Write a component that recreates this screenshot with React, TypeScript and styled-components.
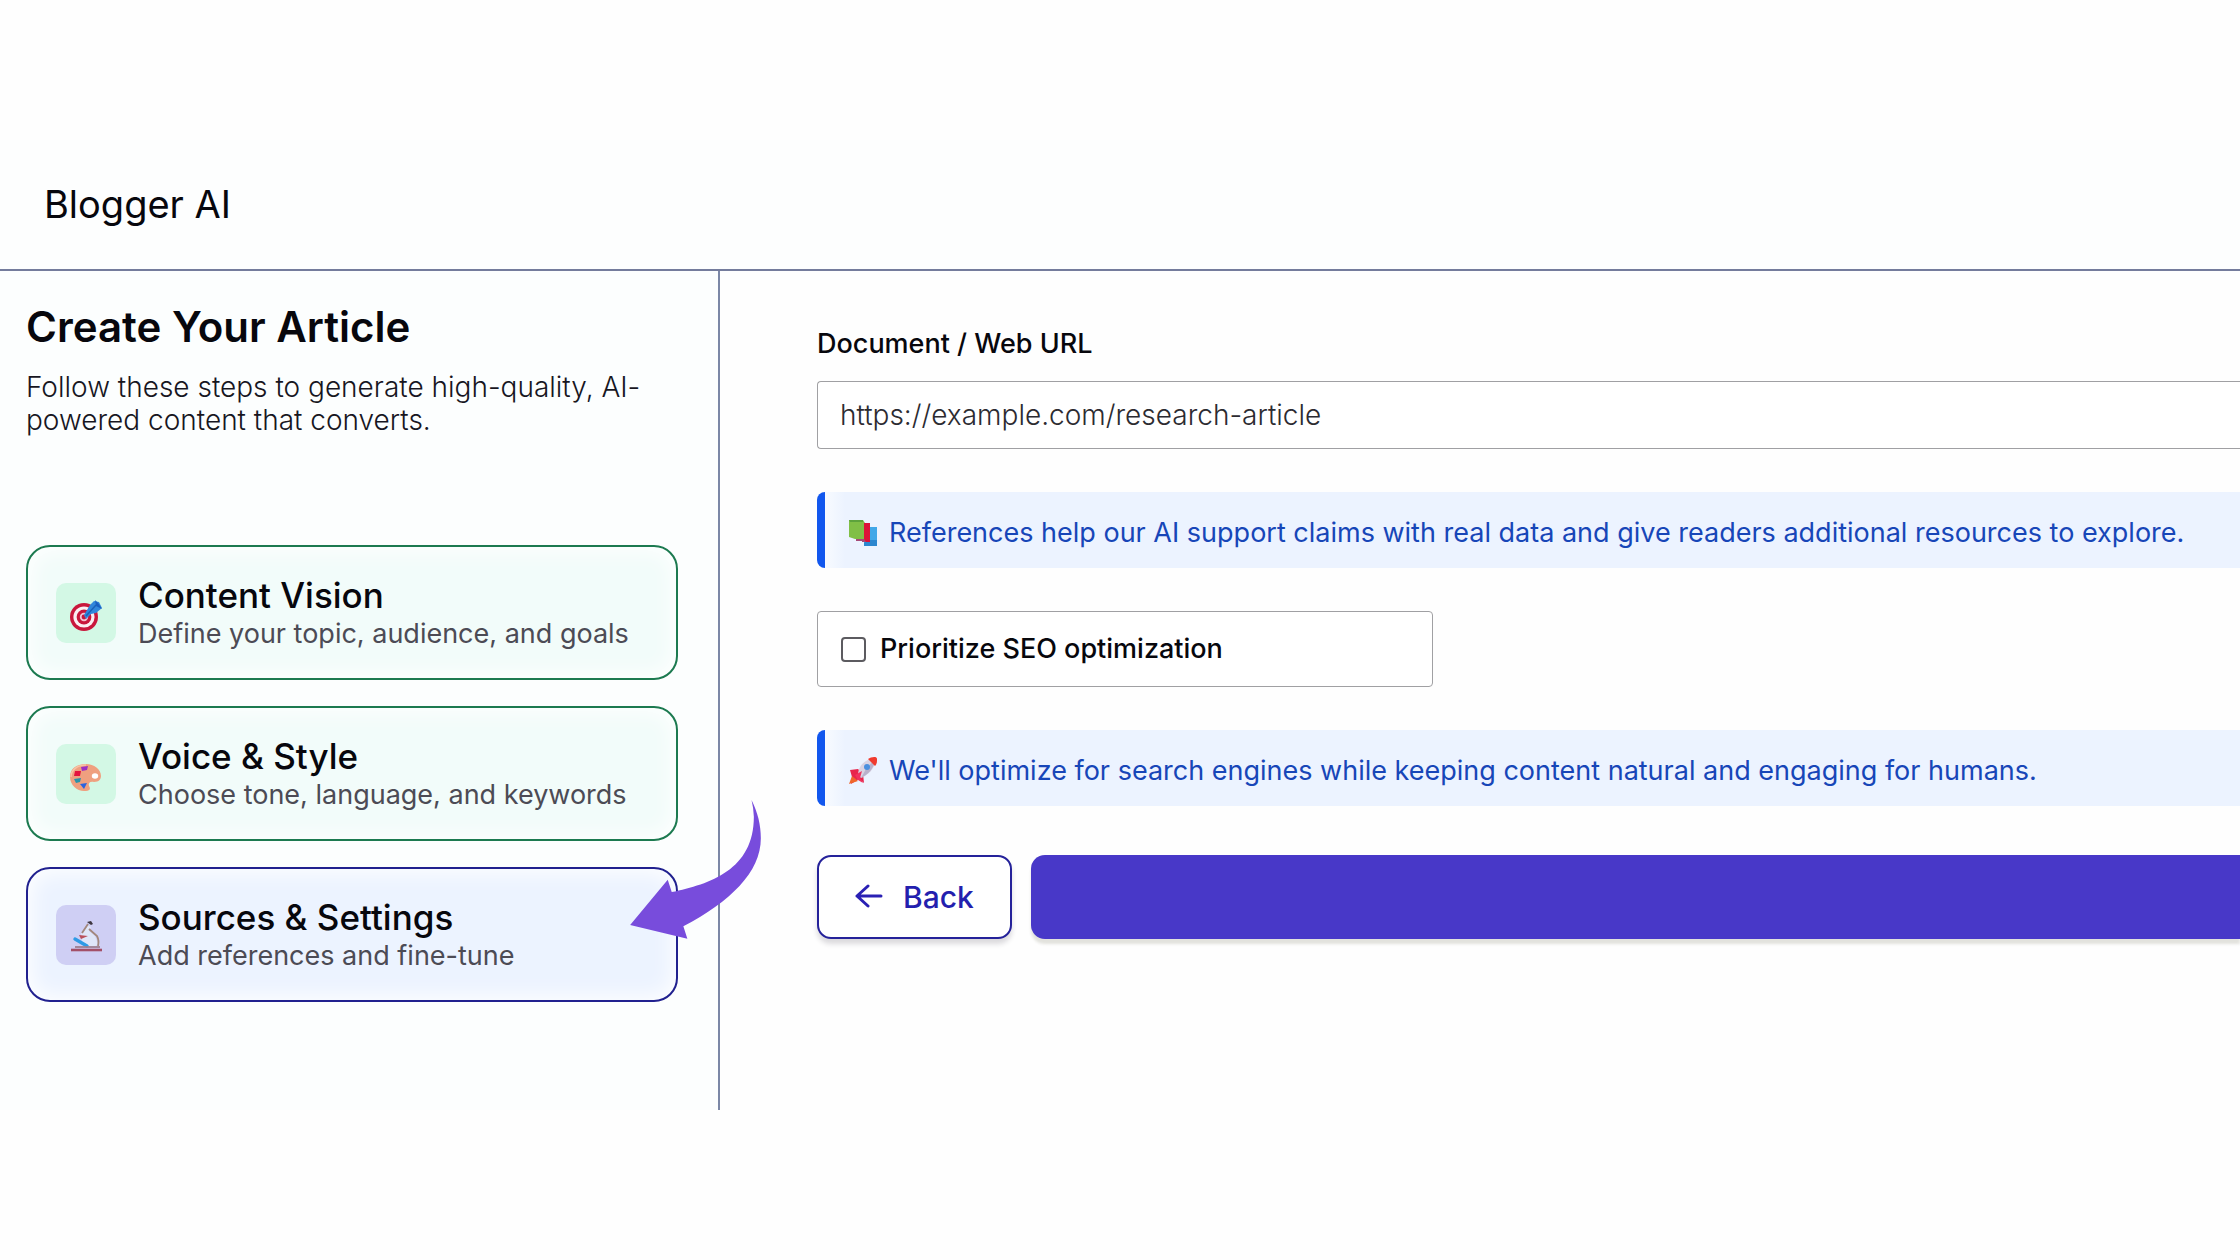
import React from "react";
import styled, { createGlobalStyle } from "styled-components";

type Tone = "done" | "active";

const tones: Record<Tone, { border: string; fill: string; tile: string }> = {
  done: { border: "#1c7a50", fill: "#f2fcfa", tile: "#d3f8e5" },
  active: { border: "#21218f", fill: "#ecf3ff", tile: "#cfcff4" },
};

const GlobalStyle = createGlobalStyle`
  *, *::before, *::after { box-sizing: border-box; }
  body {
    margin: 0;
    background: #fefefe;
    color: #07070d;
    font-family: Inter, "Liberation Sans", sans-serif;
    font-size: 27px;
    line-height: 33px;
    overflow-x: hidden;
  }
  button, input { font: inherit; color: inherit; }
`;

const Page = styled.div`
  padding: 140px 0;
`;

const Header = styled.header`
  padding: 40px 44px;
  border-bottom: 2px solid #747c9c;
  background: #fdfefe;
`;

const Brand = styled.div`
  font-size: 38px;
  line-height: 49px;
`;

const Body = styled.div`
  display: grid;
  grid-template-columns: 720px minmax(0, 1fr);
`;

const Sidebar = styled.aside`
  padding: 32px 40px 108px 26px;
  border-right: 2px solid #7b87a6;
  background: #fcfefe;
`;

const Title = styled.h1`
  margin: 0 0 20px;
  font-size: 42px;
  font-weight: 600;
  line-height: 48px;
`;

const Intro = styled.p`
  margin: 0 0 108px;
  color: #17161f;
  font-size: 28px;
  font-weight: 300;
`;

const Steps = styled.ol`
  display: flex;
  flex-direction: column;
  gap: 26px;
  margin: 0;
  padding: 0;
  list-style: none;
`;

const Step = styled.li`
  position: relative;
`;

const StepCard = styled.button<{ $tone: Tone }>`
  display: flex;
  align-items: center;
  gap: 22px;
  width: 100%;
  padding: 28px;
  border: 2px solid ${(p) => tones[p.$tone].border};
  border-radius: 24px;
  background: ${(p) => tones[p.$tone].fill};
  box-shadow: inset 0 0 22px 3px #ffffff;
  text-align: left;
  cursor: pointer;
`;

const IconTile = styled.span<{ $tone: Tone }>`
  display: flex;
  flex: none;
  align-items: center;
  justify-content: center;
  width: 60px;
  height: 60px;
  border-radius: 10px;
  background: ${(p) => tones[p.$tone].tile};
`;

const StepText = styled.span`
  display: flex;
  flex-direction: column;
  min-width: 0;
`;

const StepName = styled.span`
  padding-bottom: 2px;
  font-size: 35px;
  font-weight: 500;
  line-height: 40px;
`;

const StepNote = styled.span`
  color: #4c4b55;
`;

const Pointer = styled.svg`
  position: absolute;
  top: -67px;
  right: -83px;
  width: 131px;
  height: 139px;
  pointer-events: none;
`;

const Form = styled.form`
  display: flex;
  flex-direction: column;
  gap: 43px;
  padding: 56px 0 0 97px;
`;

const Field = styled.div`
  display: flex;
  flex-direction: column;
  gap: 20px;
`;

const Label = styled.label`
  font-weight: 500;
  line-height: 34px;
`;

const UrlInput = styled.input`
  width: 100%;
  height: 68px;
  padding: 0 22px;
  border: 1px solid #a0a0a3;
  border-right: 0;
  border-radius: 4px 0 0 4px;
  background: #ffffff;
  font-size: 28px;
  font-weight: 300;
  &::placeholder {
    color: #2c2b31;
    opacity: 1;
  }
`;

const Note = styled.p`
  display: flex;
  align-items: center;
  gap: 12px;
  margin: 0;
  padding: 24px 24px 18px;
  border-left: 8px solid #1257ee;
  border-radius: 8px 0 0 8px;
  background: linear-gradient(to right, #f8fbff, #ecf3ff 20px);
  color: #1746b8;
  line-height: 34px;
`;

const NoteIcon = styled.svg`
  flex: none;
  width: 28px;
  height: 28px;
`;

const CheckRow = styled.label`
  display: flex;
  align-items: center;
  gap: 14px;
  width: 616px;
  max-width: 100%;
  padding: 20px 23px;
  border: 1px solid #a0a0a3;
  border-radius: 4px;
  background: #ffffff;
  font-weight: 500;
  line-height: 34px;
`;

const Checkbox = styled.input`
  appearance: none;
  flex: none;
  width: 25px;
  height: 25px;
  margin: 0;
  border: 2px solid #5c5b60;
  border-radius: 4px;
  background: #ffffff;
  &:checked {
    background: #4838c8;
  }
`;

const Actions = styled.div`
  display: flex;
  gap: 19px;
  padding-top: 6px;
`;

const BackButton = styled.button`
  display: flex;
  align-items: center;
  gap: 20px;
  height: 84px;
  padding: 0 36px;
  border: 2px solid #25229a;
  border-radius: 14px;
  background: #ffffff;
  box-shadow: 0 5px 5px rgba(40, 30, 50, 0.16);
  color: #241fae;
  font-size: 30px;
  font-weight: 500;
  cursor: pointer;
`;

const SubmitButton = styled.button`
  flex: 1;
  height: 84px;
  border: 0;
  border-radius: 14px 0 0 14px;
  background: #4838c8;
  box-shadow: 0 5px 3px rgba(60, 60, 20, 0.14);
  cursor: pointer;
`;

const TargetIcon = () => (
  <svg width="36" height="40" viewBox="0 0 36 40" aria-hidden="true">
    <circle cx="16" cy="24" r="14" fill="#c9173c" />
    <circle cx="16" cy="24" r="10.6" fill="#fbeef2" />
    <circle cx="16" cy="24" r="7.4" fill="#c9173c" />
    <circle cx="16" cy="24" r="4.2" fill="#f3c3d0" />
    <circle cx="16" cy="24" r="2.4" fill="#c9173c" />
    <path d="M16 22 22 12l4-4 5 1 3 6-6 5-5 1-5 5z" fill="#3187db" />
    <path d="m18 23 10-11" stroke="#1b62b8" strokeWidth="1.5" />
    <path d="m27 7 1 6 6 3-4-6z" fill="#1a5fc0" />
  </svg>
);

const PaletteIcon = () => (
  <svg width="36" height="40" viewBox="0 0 36 40" aria-hidden="true">
    <path
      d="M18 10C8 10 2 15 2 23c0 8 7 14 14 14 6 0 7-2 5-5-1-3 1-5 5-4 5 0 7-3 7-6 0-7-7-12-15-12z"
      fill="#efa07f"
    />
    <path d="M18 11C9 11 3 16 3 23" fill="none" stroke="#f8c3a6" strokeWidth="1.5" />
    <ellipse cx="27" cy="22" rx="3.2" ry="2.8" fill="#ffffff" />
    <path d="m13 13 7-1-1 4-5 1z" fill="#9a2fc4" />
    <path d="m7 17 6 0-1 5-6 0z" fill="#e4133f" />
    <path d="m6 25 7-1-1 4-4 1z" fill="#2b93a8" />
    <path d="m12 30 7-1-3 6z" fill="#2a63e0" />
  </svg>
);

const MicroscopeIcon = () => (
  <svg width="36" height="40" viewBox="0 0 36 40" fill="none" aria-hidden="true">
    <path d="m13 19 6-9 4 2-2 4 6 5 3 8-3 3H15z" fill="#dfe6f9" />
    <path d="m14 18 6-9M21 14l8 7c2 4 2 6 1 10" stroke="#a2877c" strokeWidth="1.8" />
    <path d="m19 7 4-1 2 3-2 1z" fill="#3d3640" />
    <path d="m11 20 9 1-7 3z" fill="#b9505c" />
    <path d="m7 24 12 7" stroke="#2f9be6" strokeWidth="3.4" strokeLinecap="round" />
    <path d="M7 32h25" stroke="#9c7f91" strokeWidth="1.8" />
    <path d="M3 35h31" stroke="#a35068" strokeWidth="2.6" />
  </svg>
);

const BooksIcon = () => (
  <NoteIcon viewBox="0 0 28 28" aria-hidden="true">
    <path d="M16 8h12v17H15z" fill="#41a7e8" />
    <path d="M17 21h11v6H15v-3z" fill="#2c86cf" />
    <path d="M7 19h10v4h-4v-1H7z" fill="#a54a78" />
    <path d="M0 1h14l2 3v16H6l-6-2z" fill="#80bf46" />
    <path d="M0 1h14v2H1z" fill="#5da33c" />
    <path d="M15 4h6v19h-4l-2-3z" fill="#dc1238" />
  </NoteIcon>
);

const RocketIcon = () => (
  <NoteIcon viewBox="0 0 28 28" aria-hidden="true">
    <path d="m1 13 8-1 5 5 1 9-5-4-8 5 1-7z" fill="#e8254c" />
    <path d="m0 27 3-8 6 5z" fill="#f0662b" />
    <path d="M9 18C9 9 16 2 26 1c1 9-5 16-14 20z" fill="#d9d3e2" />
    <path d="M12 21C20 17 26 10 26 2l-9 10z" fill="#b9b1cb" />
    <path d="M19 2c3-2 9-3 9 0 0 3 0 5-2 7z" fill="#f03a2e" />
    <circle cx="18" cy="10" r="3" fill="#4b90df" />
    <path d="m6 18 7-4-2 7 3 5-5-3z" fill="#f1315d" />
  </NoteIcon>
);

const BackArrow = () => (
  <svg width="28" height="28" viewBox="0 0 28 28" fill="none" aria-hidden="true">
    <path
      d="M26 13H2M13 3 2 13l11 10"
      stroke="#2a20b4"
      strokeWidth="3"
      strokeLinecap="round"
      strokeLinejoin="round"
    />
  </svg>
);

const CurvedPointer = () => (
  <Pointer viewBox="90 60 393 418" aria-hidden="true">
    <path
      d="M455 60C474 98 483 135 483 175C483 278 390 366 250 440L262 477L90 436L203 300L215 337C330 312 462 270 462 110Q461 84 455 60Z"
      fill="#784cdc"
    />
  </Pointer>
);

const steps: { name: string; note: string; tone: Tone; icon: React.ReactNode }[] = [
  { name: "Content Vision", note: "Define your topic, audience, and goals", tone: "done", icon: <TargetIcon /> },
  { name: "Voice & Style", note: "Choose tone, language, and keywords", tone: "done", icon: <PaletteIcon /> },
  { name: "Sources & Settings", note: "Add references and fine-tune", tone: "active", icon: <MicroscopeIcon /> },
];

export default function App() {
  return (
    <>
      <GlobalStyle />
      <Page>
        <Header>
          <Brand>Blogger AI</Brand>
        </Header>
        <Body>
          <Sidebar>
            <Title>Create Your Article</Title>
            <Intro>Follow these steps to generate high-quality, AI-powered content that converts.</Intro>
            <Steps>
              {steps.map((step) => (
                <Step key={step.name}>
                  <StepCard
                    type="button"
                    $tone={step.tone}
                    aria-current={step.tone === "active" ? "step" : undefined}
                  >
                    <IconTile $tone={step.tone}>{step.icon}</IconTile>
                    <StepText>
                      <StepName>{step.name}</StepName>
                      <StepNote>{step.note}</StepNote>
                    </StepText>
                  </StepCard>
                  {step.tone === "active" && <CurvedPointer />}
                </Step>
              ))}
            </Steps>
          </Sidebar>
          <Form onSubmit={(e) => e.preventDefault()}>
            <Field>
              <Label htmlFor="source-url">Document / Web URL</Label>
              <UrlInput id="source-url" type="url" placeholder="https://example.com/research-article" />
            </Field>
            <Note>
              <BooksIcon />
              <span>
                References help our AI support claims with real data and give readers additional resources to explore.
              </span>
            </Note>
            <CheckRow htmlFor="seo">
              <Checkbox id="seo" type="checkbox" />
              Prioritize SEO optimization
            </CheckRow>
            <Note>
              <RocketIcon />
              <span>
                We'll optimize for search engines while keeping content natural and engaging for humans.
              </span>
            </Note>
            <Actions>
              <BackButton type="button">
                <BackArrow />
                Back
              </BackButton>
              <SubmitButton type="submit" aria-label="Generate article" />
            </Actions>
          </Form>
        </Body>
      </Page>
    </>
  );
}
